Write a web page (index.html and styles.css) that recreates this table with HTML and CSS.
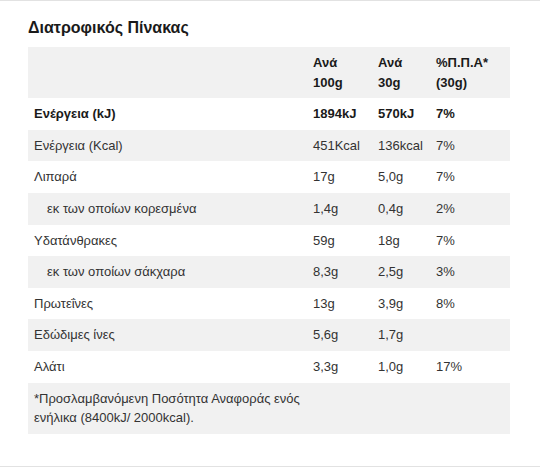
FILE: index.html
```html
<!DOCTYPE html>
<html lang="el">

<head>
  <meta charset="UTF-8">
  <meta name="viewport" content="width=device-width, initial-scale=1.0">
  <title>Διατροφικός Πίνακας</title>

  <link rel="stylesheet" href="styles.css">
</head>

<body>
  <div class="nutrition">
    <h3 class="title">Διατροφικός Πίνακας</h3>
    <table class="facts">
      <colgroup>
        <col class="c-name">
        <col class="c-100">
        <col class="c-30">
        <col class="c-ri">
      </colgroup>
      <thead>
        <tr>
          <th></th>
          <th>Ανά<br>100g</th>
          <th>Ανά<br>30g</th>
          <th>%Π.Π.Α*<br>(30g)</th>
        </tr>
      </thead>
      <tbody>
        <tr class="strong">
          <td>Ενέργεια (kJ)</td>
          <td>1894kJ</td>
          <td>570kJ</td>
          <td>7%</td>
        </tr>
        <tr>
          <td>Ενέργεια (Kcal)</td>
          <td>451Kcal</td>
          <td>136kcal</td>
          <td>7%</td>
        </tr>
        <tr>
          <td>Λιπαρά</td>
          <td>17g</td>
          <td>5,0g</td>
          <td>7%</td>
        </tr>
        <tr>
          <td class="sub">εκ των οποίων κορεσμένα</td>
          <td>1,4g</td>
          <td>0,4g</td>
          <td>2%</td>
        </tr>
        <tr>
          <td>Υδατάνθρακες</td>
          <td>59g</td>
          <td>18g</td>
          <td>7%</td>
        </tr>
        <tr>
          <td class="sub">εκ των οποίων σάκχαρα</td>
          <td>8,3g</td>
          <td>2,5g</td>
          <td>3%</td>
        </tr>
        <tr>
          <td>Πρωτεΐνες</td>
          <td>13g</td>
          <td>3,9g</td>
          <td>8%</td>
        </tr>
        <tr>
          <td>Εδώδιμες ίνες</td>
          <td>5,6g</td>
          <td>1,7g</td>
          <td></td>
        </tr>
        <tr>
          <td>Αλάτι</td>
          <td>3,3g</td>
          <td>1,0g</td>
          <td>17%</td>
        </tr>
        <tr class="note">
          <td>*Προσλαμβανόμενη Ποσότητα Αναφοράς ενός ενήλικα (8400kJ/ 2000kcal).</td>
          <td></td>
          <td></td>
          <td></td>
        </tr>
      </tbody>
    </table>
  </div>
</body>

</html>
```

FILE: styles.css
```css
* {
  margin: 0;
  padding: 0;
  box-sizing: border-box;
}

body {
  font-family: "Liberation Sans", Arial, sans-serif;
  color: #333;
  background: #fff;
}

.nutrition {
  height: 467px;
  padding: 16px 28px 0 28px;
  border-top: 1px solid #e2e2e2;
  border-bottom: 1px solid #e2e2e2;
}

.nutrition .title {
  font-size: 16px;
  line-height: 22px;
  font-weight: bold;
  color: #1a1a1a;
  margin-bottom: 8px;
}

.facts {
  width: 482px;
  border-collapse: collapse;
  table-layout: fixed;
  font-size: 13px;
}

.facts .c-name {
  width: 279px;
}

.facts .c-100 {
  width: 65px;
}

.facts .c-30 {
  width: 58px;
}

.facts .c-ri {
  width: 80px;
}

.facts th,
.facts td {
  text-align: left;
  vertical-align: top;
  padding: 6px 6px;
  line-height: 19.6px;
}

.facts thead tr {
  background: #f1f1f1;
}

.facts th {
  font-weight: bold;
  color: #1a1a1a;
}

.facts tbody tr:nth-child(even) {
  background: #f1f1f1;
}

.facts tr.strong td {
  font-weight: bold;
  color: #1a1a1a;
}

.facts td.sub {
  padding-left: 19px;
}

.facts tr.note td:first-child {
  padding-right: 0;
}
```
